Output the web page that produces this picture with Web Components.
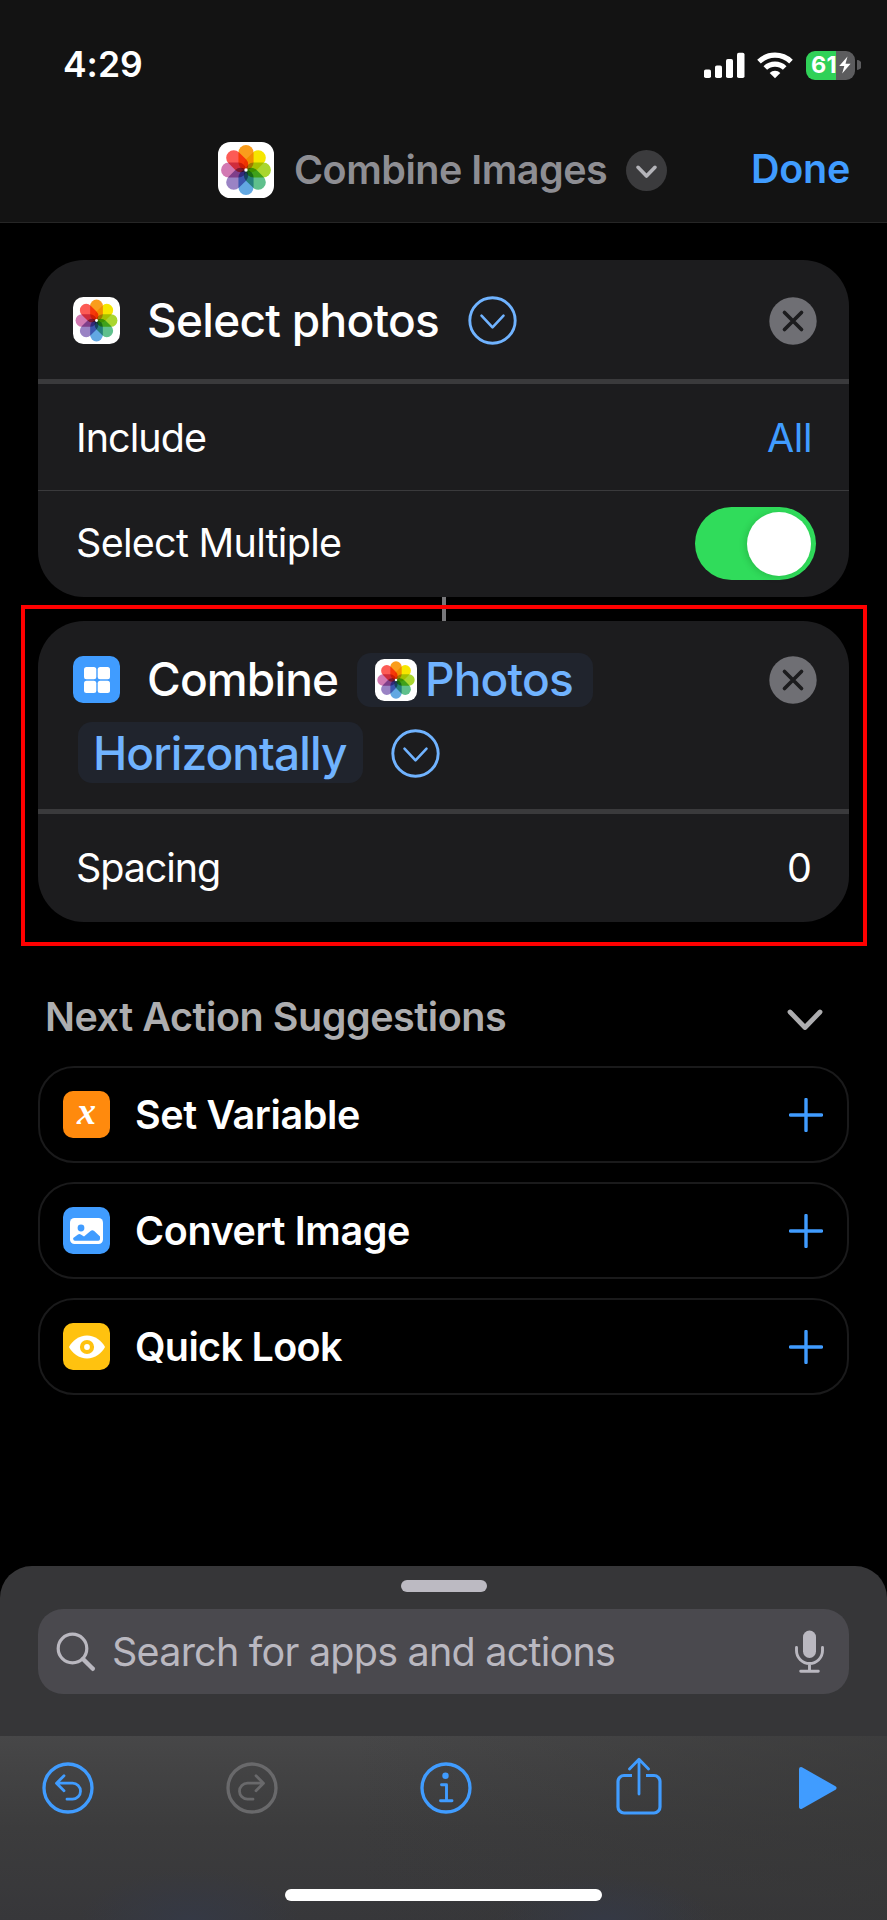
<!DOCTYPE html>
<html lang="en">
<head>
<meta charset="utf-8">
<title>Combine Images</title>
<style>
html,body{margin:0;background:#000}
body{font-family:Inter,"Liberation Sans",sans-serif;color:#fff;width:887px;height:1920px;overflow:hidden}
</style>
</head>
<body>
<shortcut-editor></shortcut-editor>
<script>
const define = (name, html, init) => {
  const tpl = document.createElement('template');
  tpl.innerHTML = html;
  customElements.define(name, class extends HTMLElement {
    constructor() {
      super();
      this.attachShadow({ mode: 'open' }).append(tpl.content.cloneNode(true));
    }
    connectedCallback() { if (init) init(this, this.shadowRoot); }
  });
};

// A label whose ink spans exactly `w` pixels: tracking is derived from the font metrics.
const ctx = document.createElement('canvas').getContext('2d');
define('tracked-text', `<style>
:host{display:block;flex:none;white-space:pre;line-height:1.25}
span{display:block}
</style><span><slot></slot></span>`, (el, root) => {
  const size = el.getAttribute('size'), weight = el.getAttribute('weight') || 400;
  const w = +el.getAttribute('w'), text = el.textContent;
  ctx.font = `${weight} ${size}px Inter`;
  const m = ctx.measureText(text);
  const ink = m.actualBoundingBoxLeft + m.actualBoundingBoxRight;
  el.style.cssText += `;font-size:${size}px;font-weight:${weight};width:${w}px`;
  const s = root.querySelector('span');
  if (text.length > 1) s.style.letterSpacing = (w - ink) / (text.length - 1) + 'px';
  s.style.marginLeft = m.actualBoundingBoxLeft + 'px';
});

const petals = ['#fa9d1c', '#f6e600', '#a9d62f', '#5fc08c', '#62a8e2', '#9a83c4', '#d279b2', '#fc5b55']
  .map((c, i) => `<rect x="36.5" y="5.5" width="27" height="44.5" rx="13.5" fill="${c}" transform="rotate(${i * 45} 50 50)"/>`).join('');
define('photos-icon', `<style>
:host{display:block;flex:none;width:47px;height:47px}
svg{display:block;width:100%;height:100%;isolation:isolate}
g rect{mix-blend-mode:multiply}
</style><svg viewBox="0 0 100 100"><rect width="100" height="100" rx="22" fill="#fff"/><g>${petals}</g><circle cx="50" cy="50" r="3" fill="#fff"/></svg>`);

define('app-tile', `<style>
:host{display:flex;flex:none;width:47px;height:47px;border-radius:10px;align-items:center;justify-content:center}
</style><slot></slot>`);

define('status-bar', `<style>
:host{display:flex;align-items:center;height:54px;padding:38px 26px 0 64px;justify-content:space-between}
div{display:flex;align-items:center}
.bat{margin-left:13px;width:49px;height:29px;border-radius:9px;background:linear-gradient(90deg,#30d158 30px,#5c5c5e 30px);padding-left:6px;box-sizing:border-box;gap:2px}
.nub{margin-left:2px}
svg{display:block}
</style>
<tracked-text style="margin-top:1px" w="77" size="35.500" weight="600">4:29</tracked-text>
<div>
<svg width="41" height="26" fill="#fff"><rect y="17.5" width="7" height="8.5" rx="1.8"/><rect x="11" y="13.5" width="7" height="12.5" rx="1.8"/><rect x="22" y="7" width="7" height="19" rx="1.8"/><rect x="33" y=".8" width="7.5" height="25.2" rx="1.8"/></svg>
<svg style="margin-left:12px" width="36" height="27" viewBox="0 0 36 27"><g fill="none" stroke="#fff" stroke-width="5.2"><path d="M2 9.6A23 23 0 0 1 34 9.6"/><path d="M8.3 16A14 14 0 0 1 27.700 16"/></g><path d="M18 26.300 12.700 21A7.500 7.500 0 0 1 23.300 21Z" fill="#fff"/></svg>
<div class="bat"><tracked-text w="23.500" size="23.500" weight="700">61</tracked-text><svg width="14" height="18" viewBox="0 0 14 18" fill="#fff"><path d="M9.500 .5 1.200 10.100H6.300L4.200 17.500 12.600 7.700H7.500Z"/></svg></div>
<svg class="nub" width="4" height="10" fill="#5c5c5e"><path d="M0 0A5 5 0 0 1 0 10Z"/></svg>
</div>`);

define('nav-bar', `<style>
:host{display:flex;align-items:center;height:56px;padding:0 38px 0 218px;margin-top:50px}
photos-icon{width:56px;height:56px;margin-right:21px}
.t{color:#8e8e93;margin-top:1px}
svg{margin-left:19px}
.d{color:#409cff;margin-left:auto}
</style>
<photos-icon></photos-icon><tracked-text class="t" w="312" size="39.500" weight="600">Combine Images</tracked-text>
<svg width="41" height="41" viewBox="0 0 41 41"><circle cx="20.500" cy="20.500" r="20.500" fill="#3b3b3d"/><path d="M12 17.300 20.500 26 29 17.300" fill="none" stroke="#b4b4b9" stroke-width="3.600" stroke-linecap="round" stroke-linejoin="round"/></svg>
<tracked-text class="d" w="96" size="39.500" weight="600">Done</tracked-text>`);

define('disclosure-circle', `<style>:host{display:block;flex:none}svg{display:block}</style>
<svg width="49" height="49" viewBox="0 0 49 49" fill="none" stroke="#70b3ff"><circle cx="24.500" cy="24.500" r="22.700" stroke-width="2.900"/><path d="M13.500 19.700 24.500 31.300 35.500 19.700" stroke-width="2.600" stroke-linecap="round" stroke-linejoin="round"/></svg>`);

define('close-button', `<style>:host{display:block;flex:none;margin-left:auto}svg{display:block}</style>
<svg width="48" height="48" viewBox="0 0 48 48"><circle cx="24" cy="24" r="23.700" fill="#6f6f74"/><path d="M15.500 15.500 32.500 32.500M32.500 15.500 15.500 32.500" stroke="#1c1c1e" stroke-width="3.700" stroke-linecap="round"/></svg>`);

define('action-card', `<style>
:host{display:block;background:#1c1c1e;border-radius:46px;overflow:hidden}
.head{border-bottom:5px solid #3a3a3c}
</style><div class="head"><slot name="head"></slot></div><slot></slot>`);

define('head-line', `<style>:host{display:flex;align-items:center}</style><slot></slot>`);

define('param-row', `<style>
:host{display:flex;align-items:center;justify-content:space-between;height:106px;padding:0 39px 0 40px}
:host([divided]){border-bottom:1px solid #3a3a3c}
</style><slot></slot>`);

define('toggle-switch', `<style>
:host{display:flex;justify-content:flex-end;align-items:center;width:121px;height:73px;border-radius:37px;background:#30dc5b;box-sizing:border-box;padding-right:5px;margin:-1px -6px 0 0}
i{width:64px;height:64px;border-radius:50%;background:#fff;box-shadow:-2px 1px 6px rgba(0,60,0,.18)}
</style><i></i>`);

define('token-pill', `<style>
:host{display:flex;align-items:center;box-sizing:border-box;flex:none;background:#20242d;border-radius:14px;color:#70b3ff}
</style><slot></slot>`);

define('suggestion-row', `<style>
:host{display:flex;align-items:center;height:97px;box-sizing:border-box;border:2px solid #1a1a1b;border-radius:36px;padding:0 24px 0 23px;gap:26px}
svg{margin-left:auto}
::slotted(tracked-text){margin-top:2px}
</style><slot></slot><svg width="34" height="34"><path d="M17 1.500V32.500M1.500 17H32.500" stroke="#409cff" stroke-width="3.400" stroke-linecap="round"/></svg>`);

define('action-library', `<style>
:host{display:block;background:#363638;border-radius:32px 32px 0 0;height:170px;padding:14px 38px 0;box-sizing:border-box}
.grab{width:86px;height:12px;border-radius:6px;background:#bcbac2;margin:0 auto}
.search{display:flex;align-items:center;height:85px;margin-top:17px;border-radius:25px;background:#4a494e;color:#bab8c0;padding:0 25px 0 18px}
.mic{margin-left:auto}
</style>
<div class="grab"></div>
<div class="search">
<svg width="40" height="40" viewBox="0 0 40 40" fill="none" stroke="#bab8c0" stroke-linecap="round"><circle cx="16.500" cy="16.500" r="14.300" stroke-width="3.200"/><path d="M27 27 36.800 36.800" stroke-width="4.400"/></svg>
<tracked-text style="margin:2px 0 0 18px" w="500" size="39.500">Search for apps and actions</tracked-text>
<svg class="mic" width="29" height="43" viewBox="0 0 29 43" fill="none" stroke="#bab8c0" stroke-width="2.900" stroke-linecap="round"><rect x="8" y=".5" width="13" height="27.500" rx="6.500" fill="#bab8c0" stroke="none"/><path d="M1.500 17.500V20.500a13 13 0 0 0 26 0V17.500M14.500 33.500V41M5.700 41.300H23.300"/></svg>
</div>`);

define('tool-bar', `<style>
:host{display:flex;flex-direction:column;height:184px;background:radial-gradient(ellipse 110px 50px at 190px 184px,#353945,transparent),radial-gradient(ellipse 110px 45px at 605px 184px,#353945,transparent),linear-gradient(90deg,transparent 40%,rgba(54,54,54,.6)),linear-gradient(#474748,#3c3c3d 50%,#37373a)}
.icons{display:flex;align-items:center;height:104px;padding-left:42px}
.icons svg{flex:none;display:block}
.home{width:317px;height:12px;border-radius:6px;background:#fff;margin:49px 0 0 285px}
</style>
<div class="icons">
<svg width="52" height="52" viewBox="0 0 52 52" fill="none" stroke="#409cff" stroke-width="2.800" stroke-linecap="round" stroke-linejoin="round"><circle cx="26" cy="26" r="24" stroke-width="3.300"/><path d="M22 13.800 14.500 21.200 22 28.800M15 21.200H30.500a8 8 0 0 1 0 16H25"/></svg>
<svg style="margin-left:132px" width="52" height="52" viewBox="0 0 52 52" fill="none" stroke="#69696b" stroke-width="2.800" stroke-linecap="round" stroke-linejoin="round"><circle cx="26" cy="26" r="24" stroke-width="3.300"/><path d="M30 13.800 37.500 21.200 30 28.800M37 21.200H21.500a8 8 0 0 0 0 16H27"/></svg>
<svg style="margin-left:142px" width="52" height="52" viewBox="0 0 52 52" fill="none" stroke="#409cff" stroke-width="2.900" stroke-linecap="round" stroke-linejoin="round"><circle cx="26" cy="26" r="24" stroke-width="3.300"/><circle cx="25.500" cy="13.700" r="3.200" fill="#409cff" stroke="none"/><path d="M21.500 22.800H26.500V38.500M20.500 38.700H32"/></svg>
<svg style="margin:-5px 0 0 144px" width="46" height="58" viewBox="0 0 46 58" fill="none" stroke="#409cff" stroke-width="3.200" stroke-linecap="round" stroke-linejoin="round"><path d="M16 18.500H8a6 6 0 0 0-6 6V50a6 6 0 0 0 6 6H38a6 6 0 0 0 6-6V24.500a6 6 0 0 0-6-6H30" stroke-linecap="butt"/><path d="M23 37V3M13.500 12 23 2.200 32.500 12" stroke-width="2.800"/></svg>
<svg style="margin-left:136px" width="40" height="44" viewBox="0 0 40 44"><path d="M3 3 36.500 22 3 41Z" fill="#409cff" stroke="#409cff" stroke-width="4" stroke-linejoin="round"/></svg>
</div>
<div class="home"></div>`);

define('shortcut-editor', `<style>
:host{display:flex;flex-direction:column;height:1920px;background:#000}
header{height:222px;background:#131313;border-bottom:1px solid #262626;box-sizing:content-box;display:flex;flex-direction:column}
status-bar{box-sizing:border-box;height:92px}
main{flex:1;padding:37px 38px 0}
.link{width:4px;height:24px;background:#77777a;margin-left:404px}
.marked{position:relative}
.marked::after{content:"";position:absolute;left:-17px;top:-16px;width:838px;height:333px;border:4px solid #f00}
.one{height:119px;padding:2px 32px 0 35px;box-sizing:border-box}
.l1{height:55px;padding:31px 32px 0 35px}
.l2{height:61px;padding:15px 32px 26px 40px}
.sub{display:flex;align-items:center;justify-content:space-between;height:48px;margin-top:72px;padding:0 26px 0 9px;color:#adadaf}
suggestion-row{margin-bottom:19px}
.x{font:italic 700 38px/1 "Liberation Serif",serif;color:#fff;margin-top:-7px}
</style>
<header><status-bar></status-bar><nav-bar></nav-bar></header>
<main>
<action-card>
<head-line slot="head" class="one"><photos-icon></photos-icon><tracked-text style="margin:1px 0 0 29px" w="289" size="46" weight="500">Select photos</tracked-text><disclosure-circle style="margin-left:30px"></disclosure-circle><close-button></close-button></head-line>
<param-row divided><tracked-text style="margin:4px 0 0 1px" w="127" size="39.500">Include</tracked-text><tracked-text style="color:#409cff;margin-top:4px" w="42" size="39.500">All</tracked-text></param-row>
<param-row><tracked-text w="263" size="39.500">Select Multiple</tracked-text><toggle-switch></toggle-switch></param-row>
</action-card>
<div class="link"></div>
<div class="marked">
<action-card>
<div slot="head">
<head-line class="l1"><app-tile style="background:#409cff"><svg width="26" height="26" fill="#fff"><rect width="12.300" height="12.300" rx="2.500"/><rect x="13.700" width="12.300" height="12.300" rx="2.500"/><rect y="13.700" width="12.300" height="12.300" rx="2.500"/><rect x="13.700" y="13.700" width="12.300" height="12.300" rx="2.500"/></svg></app-tile><tracked-text style="margin:1px 0 0 29px" w="188" size="46" weight="500">Combine</tracked-text><token-pill style="margin-left:20px;width:236px;height:54px;padding-left:18px"><photos-icon style="width:42px;height:42px"></photos-icon><tracked-text style="margin:1px 0 0 11px" w="144" size="46" weight="500">Photos</tracked-text></token-pill><close-button></close-button></head-line>
<head-line class="l2"><token-pill style="width:285px;height:61px;padding-left:18px"><tracked-text style="margin-top:2px" w="251" size="46" weight="500">Horizontally</tracked-text></token-pill><disclosure-circle style="margin:1px 0 0 28px"></disclosure-circle></head-line>
</div>
<param-row style="height:108px"><tracked-text style="margin-top:1px" w="141" size="39.500">Spacing</tracked-text><tracked-text style="margin-top:2px" w="21" size="39.500">0</tracked-text></param-row>
</action-card>
</div>
<div class="sub"><tracked-text w="459" size="39.500" weight="600">Next Action Suggestions</tracked-text><svg style="margin-top:2px" width="36" height="22" viewBox="0 0 36 22"><path d="M3 4 18 19.500 33 4" fill="none" stroke="#adadaf" stroke-width="4.800" stroke-linecap="round" stroke-linejoin="round"/></svg></div>
<div style="height:24px"></div>
<suggestion-row><app-tile style="background:#ff8a0d"><span class="x">x</span></app-tile><tracked-text w="223" size="39.500" weight="600">Set Variable</tracked-text></suggestion-row>
<suggestion-row><app-tile style="background:#409cff"><svg width="33" height="26" viewBox="0 0 33 26"><rect width="33" height="26" rx="4.500" fill="#fff"/><circle cx="11" cy="10" r="3.400" fill="#409cff"/><path d="M3.200 21V20L8 16.400Q9.400 15.400 10.800 16.400L14 18.600 20.500 13Q22.300 11.700 24.200 13L30 18.600V21Q30 22.700 28.300 22.700H4.900Q3.200 22.700 3.200 21Z" fill="#409cff"/></svg></app-tile><tracked-text w="273" size="39.500" weight="600">Convert Image</tracked-text></suggestion-row>
<suggestion-row><app-tile style="background:#ffc20f"><svg width="36" height="24" viewBox="0 0 36 24"><path d="M0 12C3 6 10 .5 18 .5S33 6 36 12C33 18 26 23.500 18 23.500S3 18 0 12Z" fill="#fff"/><circle cx="18" cy="12" r="5" fill="none" stroke="#ffc20f" stroke-width="4.200"/></svg></app-tile><tracked-text w="207" size="39.500" weight="600">Quick Look</tracked-text></suggestion-row>
</main>
<action-library></action-library>
<tool-bar></tool-bar>`);
</script>
</body>
</html>
